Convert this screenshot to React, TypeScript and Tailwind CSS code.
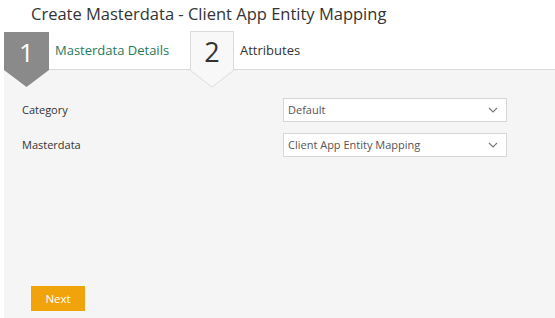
const font = { fontFamily: '"Open Sans", "Noto Sans", sans-serif' };

function Chevron() {
  return (
    <svg width="10" height="6" viewBox="0 0 10 6" className="shrink-0">
      <path d="M1 1 L5 5 L9 1" fill="none" stroke="#777" strokeWidth="1.1" />
    </svg>
  );
}

function SelectBox({ value }: { value: string }) {
  return (
    <div className="flex h-[24px] w-[224px] items-center justify-between border border-[#d6d6d6] bg-white pl-[4px] pr-[8px] text-[11px] text-[#555]">
      <span>{value}</span>
      <Chevron />
    </div>
  );
}

export default function App() {
  return (
    <div className="flex h-[318px] w-[555px] flex-col overflow-hidden bg-white" style={font}>
      {/* Title */}
      <div className="h-[32px] pl-[31px] pt-[2px] text-[16.5px] leading-[24px] text-[#333]">
        Create Masterdata - Client App Entity Mapping
      </div>

      {/* Wizard steps */}
      <div className="ml-[4px] flex h-[38px] border-b border-[#d9d9d9]">
        <div className="relative z-10 w-[45px]">
          <svg width="45" height="56" viewBox="0 0 45 56" className="absolute left-0 top-0">
            <polygon points="0,0 45,0 45,38 22.5,55 0,38" fill="#8a8a8a" />
          </svg>
          <span className="relative flex h-[40px] items-center justify-center text-[26px] text-white">1</span>
        </div>
        <div className="flex w-[141px] items-center pl-[6px] text-[13px] text-[#1f7a5c]">Masterdata Details</div>
        <div className="relative z-10 -mt-[1px] w-[44px]">
          <svg width="44" height="57" viewBox="0 0 44 57" className="absolute left-0 top-0">
            <polygon points="0.5,0.5 43.5,0.5 43.5,39.5 22,56 0.5,39.5" fill="#f8f8f8" stroke="#dcdcdc" />
          </svg>
          <span className="relative flex h-[42px] items-center justify-center text-[27px] text-[#333]">2</span>
        </div>
        <div className="flex items-center pl-[6px] text-[13px] text-[#333]">Attributes</div>
      </div>

      {/* Form panel */}
      <div className="ml-[4px] flex flex-1 flex-col bg-[#f5f5f5] pt-[28px]">
        <div className="grid grid-cols-[279px_224px] gap-y-[11px] text-[11px] text-[#333]">
          <div className="flex items-center pl-[18px] pt-[1px]">Category</div>
          <SelectBox value="Default" />
          <div className="flex items-center pl-[18px] pt-[1px]">Masterdata</div>
          <SelectBox value="Client App Entity Mapping" />
        </div>
        <div className="mt-auto mb-[7px] pl-[27px]">
          <button className="flex h-[25px] w-[54px] items-center justify-center bg-[#f0a30a] text-[11.5px] text-white">
            Next
          </button>
        </div>
      </div>
    </div>
  );
}
